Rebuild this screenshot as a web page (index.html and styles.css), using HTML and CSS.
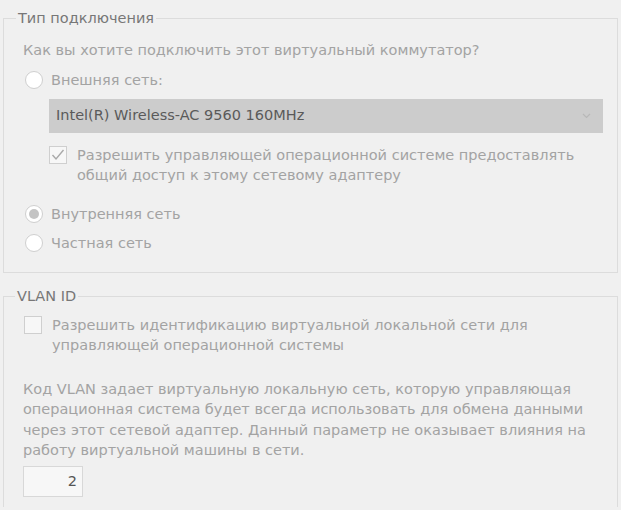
FILE: index.html
```html
<!DOCTYPE html>
<html lang="ru">
<head>
    <meta charset="UTF-8">
    <title>Виртуальный коммутатор</title>
    <link rel="stylesheet" href="styles.css">
</head>
<body>
    <fieldset class="group group-type">
        <legend>Тип подключения</legend>
        <p class="question">Как вы хотите подключить этот виртуальный коммутатор?</p>

        <div class="option radio-row">
            <span class="radio"></span>
            <span>Внешняя сеть:</span>
        </div>

        <div class="select">
            <span>Intel(R) Wireless-AC 9560 160MHz</span>
            <svg class="chevron" width="9" height="6" viewBox="0 0 9 6">
                <path d="M1 1 L4.5 4.5 L8 1" fill="none" stroke="#b8b8b8" stroke-width="1.2"/>
            </svg>
        </div>

        <div class="option check-row indent">
            <span class="checkbox">
                <svg width="16" height="16" viewBox="0 0 16 16">
                    <path d="M2.5 8 L6 12 L13.5 3" fill="none" stroke="#a9a9a9" stroke-width="1.4"/>
                </svg>
            </span>
            <span>Разрешить управляющей операционной системе предоставлять<br>общий доступ к этому сетевому адаптеру</span>
        </div>

        <div class="option radio-row internal">
            <span class="radio checked"></span>
            <span>Внутренняя сеть</span>
        </div>
        <div class="option radio-row private">
            <span class="radio"></span>
            <span>Частная сеть</span>
        </div>
    </fieldset>

    <fieldset class="group group-vlan">
        <legend>VLAN ID</legend>
        <div class="option check-row">
            <span class="checkbox"></span>
            <span>Разрешить идентификацию виртуальной локальной сети для<br>управляющей операционной системы</span>
        </div>

        <p class="note">Код VLAN задает виртуальную локальную сеть, которую управляющая<br>операционная система будет всегда использовать для обмена данными<br>через этот сетевой адаптер. Данный параметр не оказывает влияния на<br>работу виртуальной машины в сети.</p>

        <div class="vlan-input">2</div>
    </fieldset>
</body>
</html>
```
FILE: styles.css
```css
body {
    margin: 0;
    background-color: #f0f0f0;
    color: #a3a3a3;
    font-family: 'DejaVu Sans', sans-serif;
    font-size: 14.5px;
    line-height: 20.5px;
    width: 621px;
    height: 510px;
    overflow: hidden;
}
.group {
    margin: 0 3px 0 3px;
    border: 1px solid #dcdcdc;
    padding: 0 0 0 19px;
}
.group legend {
    color: #777777;
    padding: 0 2px;
    margin-left: -7px;
}
.group-vlan legend {
    margin-left: -8px;
}
.group-type {
    margin-top: 8px;
    height: 265px;
    box-sizing: border-box;
}
.group-vlan {
    margin-top: 13px;
    border-bottom: none;
    height: 220px;
}
.question {
    margin: 0;
    padding-top: 11px;
}
.option {
    display: flex;
    align-items: flex-start;
    gap: 8px;
}
.radio-row {
    margin-top: 10px;
    margin-left: 2px;
}
.radio {
    width: 18px;
    height: 18px;
    box-sizing: border-box;
    border: 1px solid #cfcfcf;
    border-radius: 50%;
    background-color: #ffffff;
    margin-top: 1px;
    display: flex;
    justify-content: center;
    align-items: center;
}
.radio.checked::after {
    content: '';
    width: 10px;
    height: 10px;
    border-radius: 50%;
    background-color: #c4c4c4;
}
.select {
    margin: 8px 14px 0 26px;
    height: 34px;
    background-color: #cccccc;
    color: #5a5a5a;
    display: flex;
    align-items: center;
    justify-content: space-between;
    padding: 0 12px 0 7px;
}
.checkbox {
    width: 18px;
    height: 18px;
    flex-shrink: 0;
    box-sizing: border-box;
    border: 1px solid #cfcfcf;
    background-color: #f7f7f7;
    margin-top: 1px;
    display: flex;
    justify-content: center;
    align-items: center;
}
.check-row {
    gap: 10px;
}
.indent {
    margin: 12px 0 0 26px;
}
.internal {
    margin-top: 18px;
}
.private {
    margin-top: 9px;
}
.group-vlan .check-row {
    margin-top: 8px;
    margin-left: 1px;
}
.note {
    margin: 23px 0 0 0;
}
.vlan-input {
    margin-top: 5px;
    width: 60px;
    height: 31px;
    box-sizing: border-box;
    border: 1px solid #d8d8d8;
    background-color: #f7f7f7;
    color: #555555;
    text-align: right;
    padding: 4px 5px 0 0;
}
```
